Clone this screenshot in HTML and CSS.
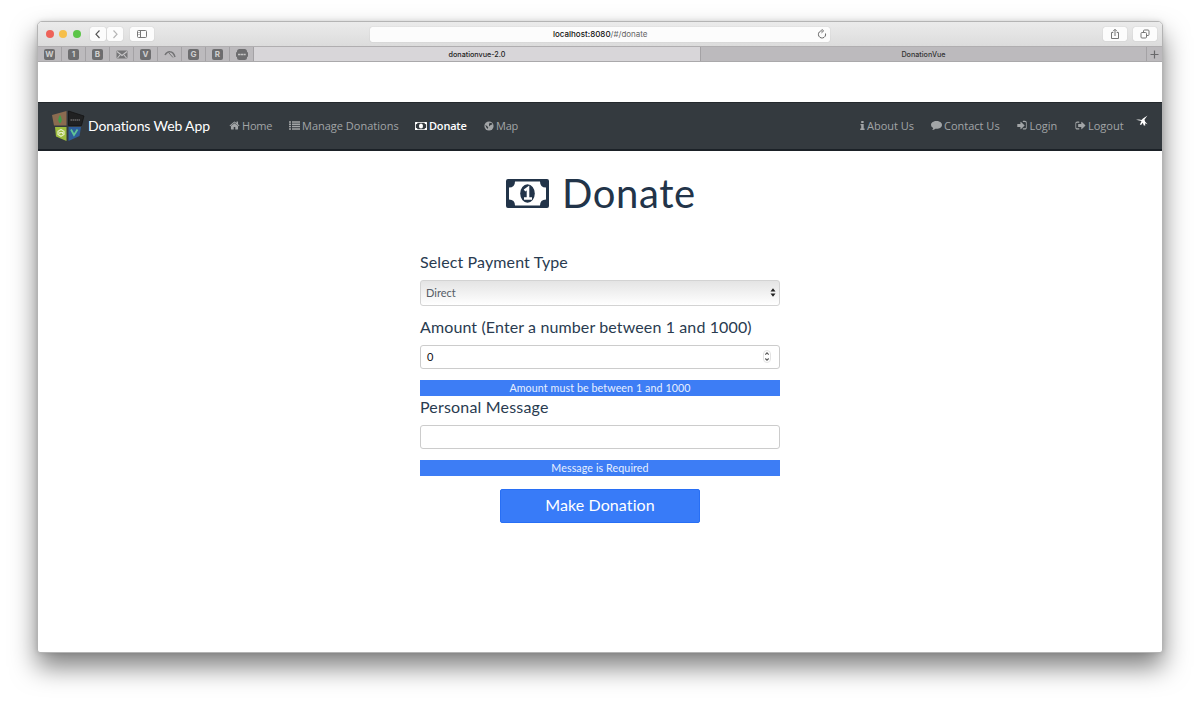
FILE: index.html
```html
<!DOCTYPE html>
<html lang="en">
<head>
<meta charset="utf-8">
<title>donationvue-2.0</title>
<link rel="stylesheet" href="styles.css">
</head>
<body>
<svg width="0" height="0" class="defs">
  <symbol id="bill" viewBox="0 0 43 29">
    <path fill="currentColor" fill-rule="evenodd" d="M2 0H41Q43 0 43 2V27Q43 29 41 29H2Q0 29 0 27V2Q0 0 2 0ZM9 2.5Q9 8.500 3 8.500V20.500Q9 20.500 9 26.500H34Q34 20.500 40 20.500V8.500Q34 8.500 34 2.500Z"/>
    <ellipse cx="21.500" cy="14.500" rx="7.300" ry="9.200" fill="currentColor"/>
    <path class="bill-one" fill="none" stroke-width="2.600" d="M18.500 11.500L22 9V19M18 19.500H26"/>
  </symbol>
</svg>
<div class="window">
  <header class="toolbar">
    <div class="lights"><i class="red"></i><i class="yellow"></i><i class="green"></i></div>
    <div class="history">
      <span class="tool"><svg width="16" height="14" fill="none" stroke="#555"><path stroke-width="1.200" d="M9.500 3.500L6 7.200L9.500 11"/></svg></span>
      <span class="tool"><svg width="16" height="14" fill="none" stroke="#b5b5b5"><path stroke-width="1.200" d="M6.500 3.500L10 7.200L6.500 11"/></svg></span>
    </div>
    <span class="tool side"><svg width="12" height="10" fill="none" stroke="#777"><rect x="1.500" y="1.500" width="9" height="7" rx="1"/><path d="M4.500 1.500V8.500M2.500 3.500H3.500M2.500 5.500H3.500"/></svg></span>
    <div class="address"><span><b>localhost:8080</b>/#/donate</span>
      <svg class="reload" width="10" height="10" fill="none" stroke="#666"><path d="M8.500 4.500A3.600 3.600 0 1 1 5 1.800M4.500 0L6.600 1.900L4.500 3.800"/></svg>
    </div>
    <div class="actions">
      <span class="tool"><svg width="10" height="12" fill="none" stroke="#777"><path d="M3.300 4.500H1.500V10.500H8.500V4.500H6.700M5 8V1.500M3 3.300L5 1.300L7 3.300"/></svg></span>
      <span class="tool"><svg width="10" height="10" fill="none" stroke="#777"><rect x="1" y="3.500" width="5.500" height="5.500" rx="1"/><path d="M3.500 3V2Q3.500 1 4.500 1H8Q9 1 9 2V5.500Q9 6.500 8 6.500H7"/></svg></span>
    </div>
  </header>
  <div class="tabs">
    <span class="pin"><i>W</i></span><span class="pin"><i>1</i></span><span class="pin"><i>B</i></span>
    <span class="pin"><svg width="12" height="9"><rect x=".5" y=".5" width="11" height="8" rx="1" fill="#757577"/><path d="M1 1.500L6 5.500L11 1.500M1.500 8L4 5M10.500 8L8 5" stroke="#c8c7c9" stroke-width="1.100" fill="none"/></svg></span>
    <span class="pin"><i>V</i></span>
    <span class="pin"><svg width="12" height="9" fill="none" stroke="#737375"><path stroke-width="1.500" d="M1 5Q3 1.500 6 1.800Q9.500 2 11 7"/><path d="M5 3L9 7.500"/></svg></span>
    <span class="pin"><i>G</i></span><span class="pin"><i>R</i></span>
    <span class="pin"><svg width="12" height="11"><rect x="1" y="0" width="10" height="11" rx="2.500" fill="#6d6d6f"/><rect x="0" y="3" width="12" height="5" rx="1" fill="#6d6d6f"/><path d="M2 5.500H10" stroke="#c4c4c4" stroke-width="1.700" stroke-dasharray="2.300 .4"/></svg></span>
    <span class="tab current">donationvue-2.0</span>
    <span class="tab">DonationVue</span>
    <span class="plus"><svg width="9" height="9" stroke="#68686a" stroke-width="1.200"><path d="M4.500 .5V8.500M.5 4.500H8.500"/></svg></span>
  </div>
  <nav class="navbar">
    <a class="brand">
      <svg width="34" height="32" viewBox="0 0 34 32">
        <path fill="#8b6b50" d="M1 5L15.500 1V15.500H3Z"/><path fill="#202122" stroke="#111" stroke-width=".7" d="M17.500 1L33 6L30.500 15.500H17.500Z"/>
        <path fill="#9dbd3e" d="M4 17H15.500V31L5 26.500Z"/><path fill="#2e5e9a" d="M17.500 17H30L28.500 26L17.500 31Z"/>
        <path fill="#3f9b48" d="M9 5Q12.500 10 9 13.500Q5.500 10 9 5Z"/><path stroke="#888" stroke-width="1.200" stroke-dasharray="1.500 .5" d="M19.500 10H29"/>
        <path fill="none" stroke="#e6efc5" stroke-width="1.200" d="M10 19.500L13 21.300V24.500L10 26.300L7 24.500V21.300ZM8.800 24V22.500H11.500V24"/>
        <path fill="none" stroke="#5fc397" stroke-width="1.800" d="M20 19.500L23 25L26.500 19.500"/>
      </svg><span>Donations Web App</span>
    </a>
    <div class="links">
      <a><svg width="11" height="11" viewBox="0 0 1792 1792" fill="currentColor"><path d="M1472 992v480q0 26-19 45t-45 19h-384v-384h-256v384h-384q-26 0-45-19t-19-45v-480q0-1 .5-3t.5-3l575-474 575 474q1 2 1 6zm223-69l-62 74q-8 9-21 11h-3q-13 0-21-7l-692-577-692 577q-12 8-24 7-13-2-21-11l-62-74q-8-10-7-23.500t11-21.500l719-599q32-26 76-26t76 26l244 204v-195q0-14 9-23t23-9h192q14 0 23 9t9 23v408l219 182q10 8 11 21.500t-7 23.500z"/></svg><span class="t-home">Home</span></a>
      <a><svg width="11" height="9" stroke="currentColor" stroke-width="1.500"><path d="M0 1H2M3 1H11M0 3.300H2M3 3.300H11M0 5.600H2M3 5.600H11M0 7.900H2M3 7.900H11"/></svg><span class="t-manage">Manage Donations</span></a>
      <a class="active"><svg width="12" height="8" viewBox="0 0 43 29" preserveAspectRatio="none"><use href="#bill" width="43" height="29"/></svg><span class="t-donate">Donate</span></a>
      <a><svg width="10" height="10"><circle cx="5" cy="5" r="4.600" fill="currentColor"/><path fill="#343a3f" d="M5.500 1.800L8 2.300L8.300 3.500L6.500 4L5.500 5.600L4.900 4ZM1.300 3.800L3 5L4.200 6.300L3.800 8L2.300 6.500Z"/></svg><span class="t-map">Map</span></a>
    </div>
    <div class="links right">
      <a><svg width="5" height="9" fill="currentColor"><path d="M1.200 0H3.600V2H1.200ZM.5 3H3.700V7.500H4.600V9H.2V7.500H1.200V4.300H.5Z"/></svg><span class="t-about">About Us</span></a>
      <a><svg width="11" height="9" fill="currentColor"><path d="M5.500 0C8.500 0 11 1.700 11 3.900S8.500 7.800 5.500 7.800Q5 7.800 4.400 7.700Q3 9 1.200 9Q2 8.200 2.200 7Q0 5.800 0 3.900C0 1.700 2.500 0 5.500 0Z"/></svg><span class="t-contact">Contact Us</span></a>
      <a><svg width="10" height="11" viewBox="128 0 1536 1792" fill="currentColor"><path d="M1312 896q0 26-19 45l-544 544q-19 19-45 19t-45-19-19-45v-288h-448q-26 0-45-19t-19-45v-384q0-26 19-45t45-19h448v-288q0-26 19-45t45-19 45 19l544 544q19 19 19 45zm352-352v704q0 119-84.500 203.500t-203.500 84.500h-320q-30 0-32-96t32-96h320q66 0 113-47t47-113v-704q0-66-47-113t-113-47h-320q-30 0-32-96t32-96h320q119 0 203.500 84.500t84.500 203.500z"/></svg><span class="t-login">Login</span></a>
      <a><svg width="11" height="11" viewBox="0 0 1792 1792" fill="currentColor"><path d="M704 1440q0 96-32 96h-320q-119 0-203.500-84.500T64 1248V544q0-119 84.500-203.500T352 256h320q32 0 32 96t-32 96H352q-66 0-113 47t-47 113v576q0 66 47 113t113 47h320q32 0 32 96zM1696 896q0 26-19 45l-544 544q-109 60-109-64v-269H576q-64 0-64-64V704q0-64 64-64h448V352q10-110 109-45l544 544q19 19 19 45z"/></svg><span class="t-logout">Logout</span></a>
      <a class="bird"><svg width="13" height="12" fill="#fff"><path d="M0 4.800L3 4.500L5.500 5L7 3.600L11.500 .5L8.500 4.500L9 6.500L11.500 9.300L9 8.300L9.300 10.500H7.800L6.800 7.800L5.300 9.800H3.800L5.500 6Z"/></svg></a>
    </div>
  </nav>
  <main>
    <h1><svg width="43" height="29"><use href="#bill"/></svg><span>Donate</span></h1>
    <form>
      <label class="l-type">Select Payment Type</label>
      <div class="field select"><span>Direct</span><svg width="6" height="9" fill="#222"><path d="M.5 3.500L3 .3L5.500 3.500ZM.5 5.500L3 8.700L5.500 5.500Z"/></svg></div>
      <label class="l-amount">Amount (Enter a number between 1 and 1000)</label>
      <div class="field number"><span>0</span><svg width="8" height="13" fill="none"><rect x=".5" y=".5" width="7" height="12" rx="3.500" fill="#fff" stroke="#e2e2e2"/><path stroke="#555" stroke-width="1.100" d="M2.300 4.600L4 2.900L5.700 4.600M2.300 8.500L4 10.200L5.700 8.500"/></svg></div>
      <p class="alert a-amount">Amount must be between 1 and 1000</p>
      <label class="l-message">Personal Message</label>
      <div class="field"></div>
      <p class="alert a-message">Message is Required</p>
      <div class="submit"><span>Make Donation</span></div>
    </form>
  </main>
</div>
</body>
</html>
```
FILE: styles.css
```css
* { box-sizing: border-box; }
body { margin: 0; width: 1200px; height: 706px; overflow: hidden; background: #fff; padding: 21px 37px; font-family: Lato, sans-serif; font-variant-ligatures: none; color: #2c3e50; }
.defs { position: absolute; }
svg { display: block; flex: none; }
i { font-style: normal; }
.window { width: 1126px; height: 632px; border: 1px solid #b4b4b4; border-radius: 5px 5px 3px 3px; overflow: hidden; background: #fff; box-shadow: 0 14px 26px rgba(0,0,0,.5), 0 0 5px rgba(0,0,0,.12); }
.toolbar { height: 24px; display: flex; align-items: center; padding: 0 5px 0 8px; background: linear-gradient(#ebebeb, #dcdcdc); }
.lights { display: flex; gap: 5.400px; width: 44px; }
.lights i { width: 8px; height: 8px; border-radius: 50%; }
.red { background: #ee6259; } .yellow { background: #f6bf4b; } .green { background: #5cc548; }
.history { display: flex; gap: 1px; }
.tool { height: 14px; display: flex; align-items: center; justify-content: center; background: #fcfcfc; border-radius: 2px; box-shadow: 0 0 1px rgba(0,0,0,.25); }
.side { width: 24px; margin-left: 7px; }
.address { margin-left: 216px; width: 460px; height: 15px; background: #fcfcfc; border-radius: 2px; box-shadow: 0 0 1px rgba(0,0,0,.25); display: flex; align-items: center; justify-content: flex-end; padding-right: 3px; font: 8px Inter, sans-serif; color: #666; }
.address span { margin-right: 169.500px; }
.address b { font-weight: 500; color: #111; }
.actions { margin-left: auto; display: flex; gap: 6px; }
.actions .tool { width: 24px; }
.tabs { height: 16px; display: flex; background: #bcbabd; border-top: 1px solid #b0aeb0; border-bottom: 1px solid #aaa9ab; font: 500 7.200px Inter, sans-serif; color: #333; }
.pin { width: 24px; border-right: 1px solid #a4a2a5; display: flex; align-items: center; justify-content: center; }
.pin i { width: 11px; height: 11px; border-radius: 2px; background: #6d6d6f; color: #d0d0d0; font: bold 8px/11px Inter, sans-serif; text-align: center; }
.tab { width: 446px; border-right: 1px solid #a4a2a5; display: flex; align-items: center; justify-content: center; }
.tab.current { width: 447px; background: #d8d6d9; color: #222; }
.plus { flex: 1; display: flex; align-items: center; justify-content: center; }
.navbar { margin-top: 40px; height: 49px; display: flex; align-items: center; justify-content: space-between; background: #343a3f; border-top: 1px solid #24292d; border-bottom: 2px solid #1b2127; padding: 0 0 1px 13px; color: #a2a5a7; }
.brand { display: flex; align-items: center; gap: 3px; width: 178px; color: #fff; font-size: 14px; }
.brand span { letter-spacing: -.12px; white-space: nowrap; padding-bottom: 1px; }
.links { display: grid; grid-template-columns: 60px 126px 69px 60px; margin-right: auto; font: 11px "Open Sans", sans-serif; }
.links.right { grid-template-columns: 71px 86px 58px 61px 26px; margin: 0; }
.links a { display: flex; align-items: center; gap: 2px; white-space: nowrap; }
.t-home { letter-spacing: -.2px; }
.t-map { letter-spacing: -.2px; }
.t-login { padding-left: .5px; }
.links .active { color: #fff; font-weight: 600; }
.t-donate { letter-spacing: -.2px; }
.bill-one { stroke: #fff; }
.active .bill-one { stroke: #343a3f; }
.links .bird { padding-bottom: 9px; }
h1 { margin: 20px 0 0; height: 44px; display: flex; align-items: center; padding-left: 468px; font-size: 40px; line-height: 44px; font-weight: 400; color: #223449; gap: 13px; }
h1 span { letter-spacing: .6px; }
form { width: 360px; margin: 36px 0 0 382px; }
label { display: block; height: 24px; line-height: 22px; font-size: 16px; color: #293b50; white-space: nowrap; }
.l-type { letter-spacing: .12px; line-height: 21px; }
.l-amount { letter-spacing: .12px; }
.l-message { letter-spacing: .18px; }
.field { height: 24px; border: 1px solid #ccc; border-radius: 3px; background: #fff; display: flex; align-items: center; justify-content: space-between; font-size: 11px; }
.select { margin: 5px 0 10px; height: 26px; padding: 0 3px 2px 5px; background: linear-gradient(#e4e4e4, #fff); border-color: #d3d3d3; color: #555d66; }
.number { padding: 0 8px 1px 6px; color: #111; }
label + .field:not(.select) { margin-top: 5px; }
.alert { margin: 11px 0 0; height: 16px; background: #3d7df5; color: #e7effe; text-align: center; font-size: 10.700px; line-height: 15px; letter-spacing: .09px; }
.submit { width: 200px; height: 34px; margin: 13px 0 0 80px; background: #387bf8; border: 1px solid #286ff5; border-radius: 2px; color: #fff; font-size: 16px; line-height: 30px; letter-spacing: .1px; text-align: center; }
```
